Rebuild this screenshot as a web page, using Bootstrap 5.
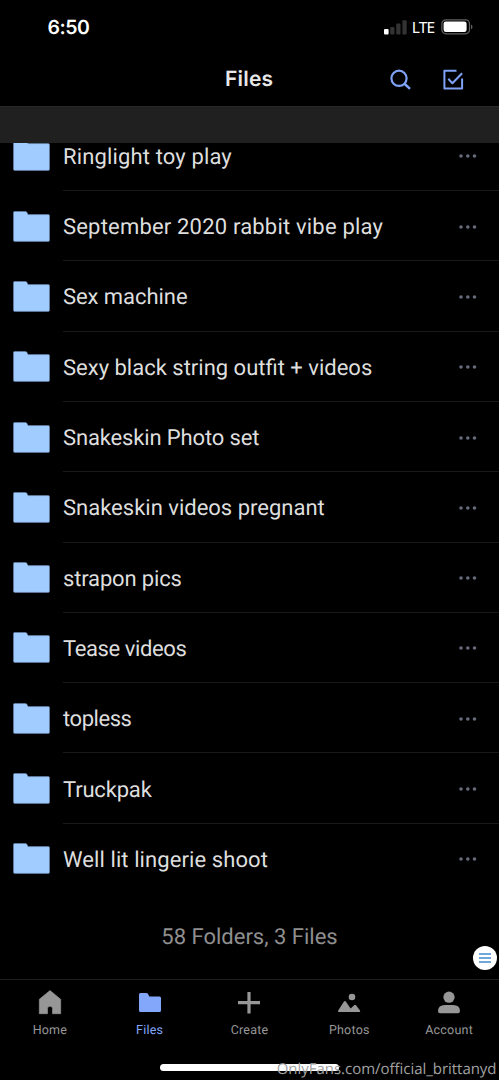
<!DOCTYPE html>
<html lang="en">
<head>
<meta charset="utf-8">
<meta name="viewport" content="width=device-width, initial-scale=1">
<title>Files</title>
<link href="https://cdn.jsdelivr.net/npm/bootstrap@5.3.0/dist/css/bootstrap.min.css" rel="stylesheet">
<style>
body { background:#000; color:#dedede; font-family:Roboto,"Liberation Sans",sans-serif; text-rendering:geometricPrecision; }
svg { display:block; flex:none; }
.app { height:1080px; overflow:hidden; }
.status { height:54px; padding:0 26px 0 47.5px; color:#fff; }
.clock { font:600 19.5px/55px Inter,sans-serif; letter-spacing:-.45px; }
.lte { font:400 15.5px/55px "Noto Sans",sans-serif; letter-spacing:-.75px; margin:0 6.5px 0 5.5px; }
.signal { margin-right:-1px; }
.titlebar { height:52px; padding:0 35px 0 225px; }
.titlebar h1 { font:600 21px/52px Inter,sans-serif; letter-spacing:.2px; color:#e8e8e8; }
.search { margin-right:31px; }
.band { height:37px; background:#202020; border-top:1px solid #292929; flex:none; }
.entry { height:70.3px; padding-left:13px; flex:none; }
.entry-body { margin-left:12.5px; height:100%; padding-right:22px; border-bottom:1px solid #191919; }
.entry:last-of-type .entry-body { border-color:transparent; }
.entry-name { font-size:22px; line-height:30px; letter-spacing:0; padding:5px 0 0 .5px; white-space:nowrap; }
.entry:nth-child(1) .entry-name { letter-spacing:.14px; }
.entry:nth-child(2) .entry-name { letter-spacing:.19px; }
.entry:nth-child(3) .entry-name { letter-spacing:-.06px; }
.entry:nth-child(5) .entry-name { letter-spacing:-.14px; }
.entry:nth-child(7) .entry-name { letter-spacing:-.16px; }
.entry:nth-child(8) .entry-name { letter-spacing:-.4px; }
.entry:nth-child(9) .entry-name { letter-spacing:-.45px; }
.entry:nth-child(10) .entry-name { letter-spacing:-.18px; }
.entry:nth-child(11) .entry-name { letter-spacing:.09px; }
.dots { position:relative; top:1px; }
.summary { height:85px; flex:none; color:#8f8f8f; font-size:22px; line-height:88px; letter-spacing:0; }
.tabs { height:101px; border-top:1px solid #1e1e1e; color:#979797; flex:none; }
.tab { width:20%; padding-top:10px; font-size:12.5px; line-height:20px; letter-spacing:.22px; }
.tab svg { margin:0 auto 5px; }
.tab-on { color:#83a7fb; }
.fab { right:2px; bottom:110.5px; width:24px; height:24px; background:#fff; }
.indicator { left:160px; bottom:9.5px; width:179px; height:6.5px; background:#fff; }
.credit { right:2.5px; bottom:0; font:400 15px/22px "Open Sans",sans-serif; letter-spacing:-.03px; color:#a3a3a3; white-space:nowrap; }
</style>
</head>
<body>
<svg width="0" height="0" class="position-absolute">
  <symbol id="folder" viewBox="0 0 37 31"><path fill="#a0ccff" stroke="#6f8db5" stroke-width=".5" d="M.5 1.5q0-1 1-1h11q1 0 1.500 1l1 2.100h20.300q1.200 0 1.200 1.200v24.400q0 1.200-1.200 1.200H1.700q-1.200 0-1.200-1.200z"/></symbol>
  <symbol id="dots" viewBox="0 0 18 4"><g fill="#676b7c"><circle cx="2" cy="2" r="1.8"/><circle cx="8.8" cy="2" r="1.8"/><circle cx="15.5" cy="2" r="1.8"/></g></symbol>
</svg>
<div class="app position-relative d-flex flex-column">
  <header>
    <div class="status d-flex align-items-center">
      <span class="clock me-auto">6:50</span>
      <svg class="signal" width="23" height="15" viewBox="0 0 23 15"><rect y="9" width="4.600" height="5.500" rx="1" fill="#fff"/><g fill="#333"><rect x="6.200" y="7" width="4.300" height="7.500" rx="1"/><rect x="12.200" y="3.400" width="4.300" height="11.100" rx="1"/><rect x="18.400" y=".2" width="4.300" height="14.300" rx="1"/></g></svg>
      <span class="lte">LTE</span>
      <svg width="32" height="16" viewBox="0 0 32 16"><rect x=".9" y=".8" width="27.600" height="14" rx="4" fill="none" stroke="#626262" stroke-width="1.200"/><rect x="2.600" y="2.500" width="23" height="10.600" rx="2.300" fill="#fff"/><path d="M30 5.500q1.500.8 1.500 2.400T30 10.300z" fill="#626262"/></svg>
    </div>
    <div class="titlebar d-flex align-items-center">
      <h1 class="m-0 me-auto">Files</h1>
      <svg class="search" width="22" height="22" viewBox="0 0 22 22" fill="none" stroke="#7fa2f6" stroke-width="2.200"><circle cx="10" cy="9.300" r="7.600"/><path d="m15.200 14.500 5.800 5.300" stroke-width="2.500"/></svg>
      <svg width="22" height="22" viewBox="0 0 22 22" fill="none" stroke="#7fa2f6" stroke-width="2" stroke-linejoin="round"><path d="M14.500 1.800H2.400v17.700h17.700V9.500M6.300 9.800l4.100 4.400 9.700-10"/></svg>
    </div>
  </header>
  <div class="band"></div>
  <main class="flex-grow-1 overflow-hidden d-flex flex-column justify-content-end" id="files"></main>
  <nav class="tabs d-flex text-center">
    <div class="tab"><svg width="24" height="26" viewBox="0 0 24 26" fill="currentColor"><path d="M12 .5 22.700 9.300V23.700H14.500v-5q0-2.500-2.500-2.500t-2.500 2.500v5H1.300V9.300z" stroke="currentColor" stroke-width=".6" stroke-linejoin="round"/></svg>Home</div>
    <div class="tab tab-on"><svg width="24" height="26" viewBox="0 0 24 26" fill="currentColor"><path d="M1 4.500Q1 3 2.500 3h6q1 0 1.500 1l1.400 2.500h10.100Q23 6.500 23 8v12.500Q23 22 21.500 22h-19Q1 22 1 20.500z"/></svg>Files</div>
    <div class="tab"><svg width="24" height="26" viewBox="0 0 24 26" fill="none" stroke="currentColor" stroke-width="3.200"><path d="M1 12.600h22M12 2v21.500"/></svg>Create</div>
    <div class="tab"><svg width="24" height="26" viewBox="0 0 24 26" fill="currentColor"><circle cx="15" cy="7" r="3.300"/><path d="M1.800 22Q.6 22 1.200 20.500L7 11.500q.9-1.200 1.800 0l4.800 7 3.500-3.300q1-1 1.900 0l4 5.300q.7 1.500-.6 1.500z"/></svg>Photos</div>
    <div class="tab"><svg width="24" height="26" viewBox="0 0 24 26" fill="currentColor"><circle cx="12" cy="7.200" r="5.600"/><path d="M1 21q0-6 7-6h8q7 0 7 6 0 2.200-2 2.200H3Q1 23.200 1 21z"/></svg>Account</div>
  </nav>
  <div class="fab position-absolute rounded-circle d-flex align-items-center justify-content-center"><svg width="12" height="10" viewBox="0 0 12 10" stroke="#4389cf" stroke-width="1.300"><path d="M0 1h12M0 5h12M0 9h12"/></svg></div>
  <div class="indicator position-absolute rounded-pill"></div>
  <div class="credit position-absolute">OnlyFans.com/official_brittanyd</div>
</div>
<script>
const names = ["Ringlight toy play", "September 2020 rabbit vibe play", "Sex machine", "Sexy black string outfit + videos", "Snakeskin Photo set", "Snakeskin videos pregnant", "strapon pics", "Tease videos", "topless", "Truckpak", "Well lit lingerie shoot"];
document.getElementById("files").innerHTML = names.map(n => `<section class="entry d-flex align-items-center"><svg width="37" height="31"><use href="#folder"/></svg><div class="entry-body flex-grow-1 d-flex align-items-center justify-content-between"><span class="entry-name">${n}</span><svg class="dots" width="18" height="4"><use href="#dots"/></svg></div></section>`).join("") + '<div class="summary text-center">58 Folders, 3 Files</div>';
</script>
<script src="https://cdn.jsdelivr.net/npm/bootstrap@5.3.0/dist/js/bootstrap.bundle.min.js"></script>
</body>
</html>
